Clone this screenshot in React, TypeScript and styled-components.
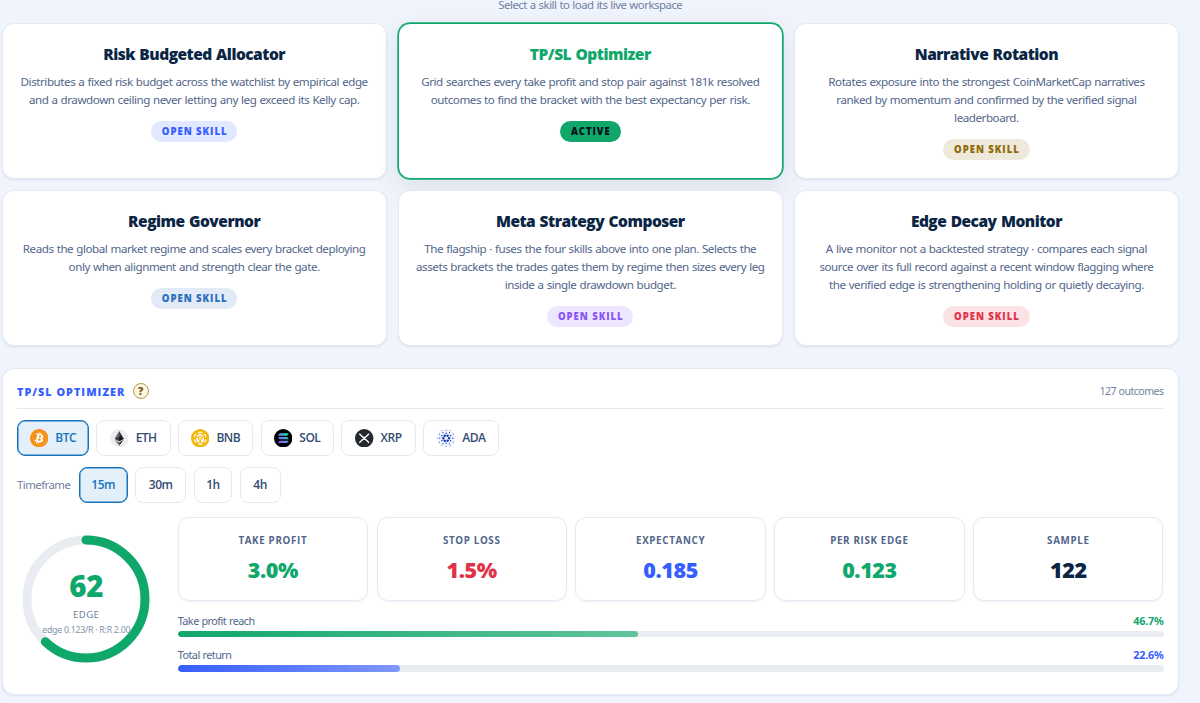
import React from 'react';
import styled, { createGlobalStyle, css } from 'styled-components';
import { SiBitcoin, SiCardano } from 'react-icons/si';

const color = {
  navy: '#0b2545',
  slate: '#52668a',
  muted: '#7182a0',
  green: '#10a76b',
  red: '#e0334a',
  blue: '#355eff',
  sky: '#1673bd',
  gold: '#8f6b09',
  violet: '#8756f5',
  line: '#e4eaf4',
  track: '#e9edf2',
};

const textFont = '"Noto Sans", "Open Sans", sans-serif';

const GlobalStyle = createGlobalStyle`
  * { box-sizing: border-box; }
  body {
    margin: 0;
    overflow: hidden;
    background: #f0f4fc;
    color: ${color.navy};
    font-family: "Open Sans", "Noto Sans", sans-serif;
  }
`;

const Page = styled.main`
  width: 1179px;
  height: 703px;
  padding-left: 1.6px;
`;

const Hint = styled.p`
  margin: 0;
  height: 23px;
  text-align: center;
  font-family: ${textFont};
  font-size: 11.4px;
  line-height: 9px;
  letter-spacing: -0.49px;
  word-spacing: 0.4px;
  color: ${color.muted};
`;

const SkillGrid = styled.section`
  display: grid;
  grid-template-columns: repeat(3, 1fr);
  grid-auto-rows: 156px;
  gap: 11px;
`;

const SkillCard = styled.article<{ $active?: boolean }>`
  display: flex;
  flex-direction: column;
  align-items: center;
  padding: 17.6px 16px 0;
  border: 1px solid ${color.line};
  border-radius: 12px;
  background: #fff;
  text-align: center;
  box-shadow: 0 1px 2px rgba(40, 70, 120, 0.1);
  ${(p) =>
    p.$active &&
    css`
      border-color: ${color.green};
      box-shadow: 0 0 0 0.7px ${color.green}, 0 8px 26px rgba(20, 45, 90, 0.1);
    `}
`;

const SkillName = styled.h3<{ $active?: boolean }>`
  margin: 0 0 5px;
  font-size: 15.5px;
  line-height: 25px;
  padding-bottom: 1px;
  font-weight: 800;
  letter-spacing: -0.5px;
  word-spacing: 0.8px;
  color: ${(p) => (p.$active ? color.green : color.navy)};
`;

const SkillText = styled.p`
  margin: 0 0 12px;
  font-family: ${textFont};
  font-size: 11.6px;
  line-height: 18px;
  letter-spacing: -0.44px;
  word-spacing: 0.5px;
  white-space: nowrap;
  color: ${color.slate};
`;

const Pill = styled.span<{ $fg: string; $bg: string }>`
  height: 21.5px;
  padding: 0 9.8px 0 10.8px;
  border-radius: 11px;
  font-size: 9.6px;
  line-height: 21.5px;
  font-weight: 800;
  letter-spacing: 0.95px;
  color: ${(p) => p.$fg};
  background: ${(p) => p.$bg};
`;

const Panel = styled.section`
  height: 327px;
  margin-top: 22px;
  padding: 5px 14.5px 0 14.4px;
  border: 1px solid ${color.line};
  border-radius: 12px;
  background: #fff;
  box-shadow: 0 1px 2px rgba(40, 70, 120, 0.1);
`;

const PanelHead = styled.header`
  display: flex;
  align-items: center;
  height: 35px;
  border-bottom: 1px solid ${color.line};
`;

const PanelTitle = styled.h2`
  margin: 0 7.4px 0 0;
  font-size: 10.8px;
  font-weight: 800;
  letter-spacing: 1.03px;
  color: ${color.blue};
`;

const Help = styled.span`
  width: 16px;
  height: 16px;
  border: 1px solid #b99a4b;
  border-radius: 50%;
  background: #fcf5e3;
  color: #7a5606;
  font-size: 10.5px;
  line-height: 14px;
  font-weight: 800;
  text-align: center;
`;

const Outcomes = styled.span`
  margin-left: auto;
  font-family: ${textFont};
  font-size: 10.6px;
  letter-spacing: -0.54px;
  word-spacing: 0.4px;
  color: ${color.muted};
`;

const ChipRow = styled.div`
  display: flex;
  align-items: center;
  gap: 7.3px;
  margin-top: 10.5px;
`;

const Chip = styled.button<{ $on?: boolean; $w: number }>`
  display: flex;
  align-items: center;
  justify-content: center;
  gap: 7px;
  width: ${(p) => p.$w}px;
  height: 36.5px;
  padding: 0;
  border: 1px solid ${color.line};
  border-radius: 8px;
  background: #fff;
  font-family: inherit;
  font-size: 12px;
  font-weight: 600;
  letter-spacing: -0.5px;
  color: #354d73;
  ${(p) =>
    p.$on &&
    css`
      border: 1.5px solid ${color.sky};
      box-shadow: inset 0 0 0 0.5px ${color.sky};
      background: #e4f0f9;
      color: ${color.sky};
    `}
  svg {
    width: 18.4px;
    height: 18.4px;
    flex: none;
  }
`;

const FieldLabel = styled.span`
  width: 54.4px;
  font-family: ${textFont};
  font-size: 11.4px;
  letter-spacing: -0.54px;
  color: ${color.muted};
`;

const Results = styled.div`
  display: grid;
  grid-template-columns: 138.5px 1fr;
  column-gap: 22.2px;
  margin-top: 14px;
`;

const Gauge = styled.div`
  display: grid;
  place-items: center;
  height: 164px;
  > * {
    grid-area: 1 / 1;
  }
`;

const GaugeText = styled.div`
  display: flex;
  flex-direction: column;
  align-items: center;
  padding-top: 7px;
`;

const Score = styled.strong`
  font-size: 29.5px;
  line-height: 36px;
  font-weight: 800;
  letter-spacing: -0.3px;
  color: ${color.green};
`;

const ScoreLabel = styled.span`
  margin-top: 2px;
  font-family: ${textFont};
  font-size: 9.6px;
  line-height: 18px;
  letter-spacing: 0.4px;
  color: ${color.muted};
`;

const ScoreNote = styled.span`
  font-family: ${textFont};
  font-size: 8.8px;
  line-height: 13px;
  letter-spacing: -0.27px;
  white-space: nowrap;
  color: #8492ab;
`;

const Metrics = styled.div`
  display: grid;
  grid-template-columns: repeat(5, 1fr);
  gap: 8.6px;
`;

const Metric = styled.div`
  display: flex;
  flex-direction: column;
  align-items: center;
  height: 84px;
  padding-top: 14px;
  border: 1px solid ${color.line};
  border-radius: 11px;
  box-shadow: 0 1px 2px rgba(40, 70, 120, 0.07);
`;

const MetricLabel = styled.span`
  font-size: 9.8px;
  line-height: 18px;
  font-weight: 700;
  letter-spacing: 0.65px;
  color: ${color.slate};
`;

const MetricValue = styled.strong<{ $c: string }>`
  margin-top: 5px;
  font-size: 21.5px;
  line-height: 30px;
  font-weight: 800;
  letter-spacing: -0.4px;
  color: ${(p) => p.$c};
`;

const Meter = styled.div`
  margin-top: 11.6px;
  & + & {
    margin-top: 9.7px;
  }
`;

const MeterHead = styled.div<{ $c: string }>`
  display: flex;
  justify-content: space-between;
  font-family: ${textFont};
  font-size: 10.8px;
  line-height: 15px;
  letter-spacing: -0.5px;
  word-spacing: 0.4px;
  color: ${color.slate};
  b {
    font-weight: 700;
    letter-spacing: -0.22px;
    color: ${(p) => p.$c};
  }
`;

const Track = styled.div`
  height: 6.5px;
  margin-top: 3.2px;
  border-radius: 4px;
  background: ${color.track};
  overflow: hidden;
`;

const Fill = styled.div<{ $from: string; $to: string }>`
  height: 100%;
  border-radius: 4px;
  background: linear-gradient(90deg, ${(p) => p.$from}, ${(p) => p.$to});
`;

const EthIcon = () => (
  <svg viewBox="0 0 36 36">
    <circle cx="18" cy="18" r="18" fill="#ecedef" />
    <path d="M18 4 9 19l9 5z" fill="#6b6d70" />
    <path d="M18 4l9 15-9 5z" fill="#2c2d30" />
    <path d="M9 19l9-4v9z" fill="#3d3e42" />
    <path d="M27 19l-9-4v9z" fill="#101113" />
    <path d="M9.2 21 18 33v-6.8z" fill="#6b6d70" />
    <path d="M26.8 21 18 33v-6.8z" fill="#2c2d30" />
  </svg>
);

const BnbIcon = () => (
  <svg viewBox="0 0 36 36">
    <circle cx="18" cy="18" r="18" fill="#f0b90b" />
    <path
      d="M13.5 8.2 18 5.6l4.5 2.6M25.5 10l3.3 2v4M28.8 20v4l-3.8 2.3M22 28l-4 2.4-4-2.4M11 26.3 7.2 24v-4M7.2 16v-4l3.3-2"
      fill="none"
      stroke="#fff"
      strokeWidth="2"
    />
    <path d="M18 9.5l7.5 4.300-2.700 1.600L18 12.700l-4.800 2.700-2.700-1.600z" fill="#fff" />
    <path d="M10.500 16.200l2.700 1.500v2.600l3.400 2v4.500l-6.100-3.500zM25.500 16.200l-2.700 1.500v2.600l-3.400 2v4.500l6.100-3.500z" fill="#fff" />
    <path d="M18 14.600l3 1.700-3 1.700-3-1.700zM15 18.200l3 1.700 3-1.700v1.300l-3 1.900-3-1.900z" fill="#fff" />
  </svg>
);

const SolIcon = () => (
  <svg viewBox="0 0 36 36">
    <defs>
      <linearGradient id="sol" x1="8" y1="27" x2="28" y2="9" gradientUnits="userSpaceOnUse">
        <stop offset="0" stopColor="#9945ff" />
        <stop offset="0.5" stopColor="#5f8fe8" />
        <stop offset="1" stopColor="#14f195" />
      </linearGradient>
    </defs>
    <circle cx="18" cy="18" r="18" fill="#000" />
    <path d="M11 8.5h18l-3.5 4.5h-18zM7.5 15.7h18l3.5 4.5H11zM11 23h18l-3.5 4.5h-18z" fill="url(#sol)" />
  </svg>
);

const XrpIcon = () => (
  <svg viewBox="0 0 36 36" fill="none" stroke="#fff" strokeWidth="2.6">
    <circle cx="18" cy="18" r="18" fill="#23292f" stroke="none" />
    <path d="M8.5 9.5l5.5 5.3c2.2 2.2 5.8 2.2 8 0l5.5-5.3M8.5 27l5.5-5.3c2.2-2.2 5.8-2.2 8 0l5.5 5.3" />
  </svg>
);

const AdaMark = styled(SiCardano)`
  && {
    width: 36px;
    height: 36px;
  }
`;

const AdaIcon = () => (
  <svg viewBox="0 0 36 36">
    <circle cx="18" cy="18" r="18" fill="#f1f4fb" />
    <AdaMark color="#0f3bbd" />
  </svg>
);

const BtcMark = styled(SiBitcoin)`
  && {
    width: 24px;
    height: 24px;
  }
`;

const BtcIcon = () => (
  <svg viewBox="0 0 24 24">
    <circle cx="12" cy="12" r="11" fill="#fff" />
    <BtcMark color="#f7931a" />
  </svg>
);

const skills = [
  { name: 'Risk Budgeted Allocator', lines: ['Distributes a fixed risk budget across the watchlist by empirical edge', 'and a drawdown ceiling never letting any leg exceed its Kelly cap.'], fg: color.blue, bg: '#e2e8ff' },
  { name: 'TP/SL Optimizer', active: true, lines: ['Grid searches every take profit and stop pair against 181k resolved', 'outcomes to find the bracket with the best expectancy per risk.'], fg: '#04141c', bg: color.green },
  { name: 'Narrative Rotation', lines: ['Rotates exposure into the strongest CoinMarketCap narratives', 'ranked by momentum and confirmed by the verified signal', 'leaderboard.'], fg: color.gold, bg: '#efe9db' },
  { name: 'Regime Governor', lines: ['Reads the global market regime and scales every bracket deploying', 'only when alignment and strength clear the gate.'], fg: '#2a6fbe', bg: '#e1eaf6' },
  { name: 'Meta Strategy Composer', lines: ['The flagship · fuses the four skills above into one plan. Selects the', 'assets brackets the trades gates them by regime then sizes every leg', 'inside a single drawdown budget.'], fg: color.violet, bg: '#ede6fe' },
  { name: 'Edge Decay Monitor', lines: ['A live monitor not a backtested strategy · compares each signal', 'source over its full record against a recent window flagging where', 'the verified edge is strengthening holding or quietly decaying.'], fg: color.red, bg: '#fae2e5' },
];

const coins = [
  { id: 'BTC', w: 72, Icon: BtcIcon },
  { id: 'ETH', w: 74.3, Icon: EthIcon },
  { id: 'BNB', w: 75.5, Icon: BnbIcon },
  { id: 'SOL', w: 73, Icon: SolIcon },
  { id: 'XRP', w: 74.7, Icon: XrpIcon },
  { id: 'ADA', w: 76.3, Icon: AdaIcon },
];

const frames = [
  { id: '15m', w: 49 },
  { id: '30m', w: 51.3 },
  { id: '1h', w: 38.7 },
  { id: '4h', w: 41 },
];

const metrics = [
  { label: 'TAKE PROFIT', value: '3.0%', c: color.green },
  { label: 'STOP LOSS', value: '1.5%', c: color.red },
  { label: 'EXPECTANCY', value: '0.185', c: color.blue },
  { label: 'PER RISK EDGE', value: '0.123', c: color.green },
  { label: 'SAMPLE', value: '122', c: color.navy },
];

const meters = [
  { label: 'Take profit reach', value: 46.7, c: color.green, to: '#62c39d' },
  { label: 'Total return', value: 22.6, c: color.blue, to: '#7f98fb' },
];

const GAUGE_R = 59;
const GAUGE_LEN = 2 * Math.PI * GAUGE_R;

export default function App() {
  return (
    <Page>
      <GlobalStyle />
      <Hint>Select a skill to load its live workspace</Hint>
      <SkillGrid>
        {skills.map((s) => (
          <SkillCard key={s.name} $active={s.active}>
            <SkillName $active={s.active}>{s.name}</SkillName>
            <SkillText>
              {s.lines.map((l, i) => (
                <React.Fragment key={l}>
                  {i > 0 && <br />}
                  {l}
                </React.Fragment>
              ))}
            </SkillText>
            <Pill $fg={s.fg} $bg={s.bg}>{s.active ? 'ACTIVE' : 'OPEN SKILL'}</Pill>
          </SkillCard>
        ))}
      </SkillGrid>
      <Panel>
        <PanelHead>
          <PanelTitle>TP/SL OPTIMIZER</PanelTitle>
          <Help>?</Help>
          <Outcomes>127 outcomes</Outcomes>
        </PanelHead>
        <ChipRow>
          {coins.map(({ id, w, Icon }, i) => (
            <Chip key={id} $w={w} $on={i === 0}>
              <Icon />
              {id}
            </Chip>
          ))}
        </ChipRow>
        <ChipRow>
          <FieldLabel>Timeframe</FieldLabel>
          {frames.map((f, i) => (
            <Chip key={f.id} $w={f.w} $on={i === 0}>{f.id}</Chip>
          ))}
        </ChipRow>
        <Results>
          <Gauge>
            <svg width="128" height="128" viewBox="0 0 128 128" fill="none" strokeWidth="9">
              <circle cx="64" cy="64" r={GAUGE_R} stroke={color.track} />
              <circle
                cx="64"
                cy="64"
                r={GAUGE_R}
                stroke={color.green}
                strokeLinecap="round"
                strokeDasharray={`${GAUGE_LEN * 0.62} ${GAUGE_LEN}`}
                transform="rotate(-90 64 64)"
              />
            </svg>
            <GaugeText>
              <Score>62</Score>
              <ScoreLabel>EDGE</ScoreLabel>
              <ScoreNote>edge 0.123/R · R:R 2.00</ScoreNote>
            </GaugeText>
          </Gauge>
          <div>
            <Metrics>
              {metrics.map((m) => (
                <Metric key={m.label}>
                  <MetricLabel>{m.label}</MetricLabel>
                  <MetricValue $c={m.c}>{m.value}</MetricValue>
                </Metric>
              ))}
            </Metrics>
            {meters.map((m) => (
              <Meter key={m.label}>
                <MeterHead $c={m.c}>
                  <span>{m.label}</span>
                  <b>{m.value}%</b>
                </MeterHead>
                <Track>
                  <Fill $from={m.c} $to={m.to} style={{ width: `${m.value}%` }} />
                </Track>
              </Meter>
            ))}
          </div>
        </Results>
      </Panel>
    </Page>
  );
}
